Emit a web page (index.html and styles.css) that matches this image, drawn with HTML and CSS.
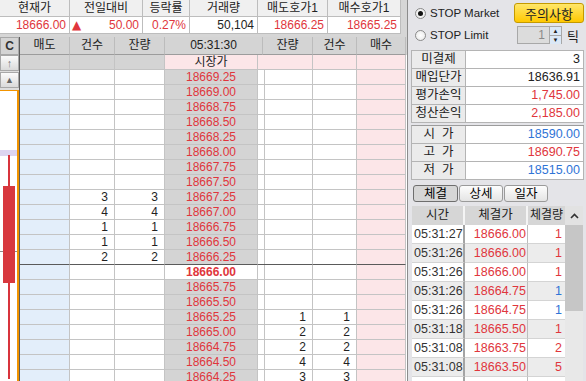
FILE: index.html
```html
<!DOCTYPE html>
<html lang="ko">
  <head>
    <meta charset="UTF-8" />
    <meta name="viewport" content="width=device-width, initial-scale=1.0" />
    <title>호가창</title>
    <link rel="stylesheet" href="styles.css">
  </head>
  <body>
    <div id="screen">
      <div class="left">
        <div class="quote">
          <div class="qh">현재가</div>
          <div class="qh">전일대비</div>
          <div class="qh">등락률</div>
          <div class="qh">거래량</div>
          <div class="qh">매도호가1</div>
          <div class="qh">매수호가1</div>
          <div class="qv up">18666.00</div>
          <div class="qv up diff"><span class="tri">▲</span><span>50.00</span></div>
          <div class="qv up">0.27%</div>
          <div class="qv">50,104</div>
          <div class="qv up">18666.25</div>
          <div class="qv up">18665.25</div>
        </div>
        <div class="book-wrap">
          <div class="side">
            <button class="tool tool-c">C</button>
            <button class="tool tool-up">↑</button>
            <button class="tool tool-tri">▲</button>
            <div class="chart">
              <div class="band"></div>
              <div class="tick"></div>
              <div class="wick"></div>
              <div class="candle"></div>
            </div>
          </div>
          <div class="book">
            <div class="book-head">
              <div>매도</div>
              <div>건수</div>
              <div>잔량</div>
              <div>05:31:30</div>
              <div>잔량</div>
              <div>건수</div>
              <div>매수</div>
            </div>
            <div class="book-row market">
              <div class="gray"></div><div class="gray"></div><div class="gray"></div>
              <div class="px">시장가</div>
              <div class="bar"></div><div></div><div></div><div class="bid"></div>
            </div>
            <div id="rows"></div>
          </div>
        </div>
      </div>

      <div class="right">
        <div class="opts">
          <label class="radio"><span class="dot on"></span>STOP Market</label>
          <button class="notice">주의사항</button>
          <label class="radio"><span class="dot"></span>STOP Limit</label>
          <div class="spin">
            <span class="spin-box">1</span>
            <span class="spin-btn"><i>▲</i><i>▼</i></span>
            <span class="unit">틱</span>
          </div>
        </div>
        <div class="info">
          <div class="lb">미결제</div><div class="vl">3</div>
          <div class="lb">매입단가</div><div class="vl">18636.91</div>
          <div class="lb">평가손익</div><div class="vl up">1,745.00</div>
          <div class="lb">청산손익</div><div class="vl up">2,185.00</div>
        </div>
        <div class="info info-price">
          <div class="lb">시&nbsp;&nbsp;가</div><div class="vl down">18590.00</div>
          <div class="lb">고&nbsp;&nbsp;가</div><div class="vl up">18690.75</div>
          <div class="lb">저&nbsp;&nbsp;가</div><div class="vl down">18515.00</div>
        </div>
        <div class="tabs">
          <button class="tab on">체결</button>
          <button class="tab">상세</button>
          <button class="tab">일자</button>
        </div>
        <div class="trades">
          <div class="tlist">
            <div class="trow thead"><div>시간</div><div>체결가</div><div>체결량</div></div>
            <div class="trow"><div>05:31:27</div><div>18666.00</div><div class="up">1</div></div>
            <div class="trow"><div>05:31:26</div><div>18666.00</div><div class="up">1</div></div>
            <div class="trow"><div>05:31:26</div><div>18666.00</div><div class="up">1</div></div>
            <div class="trow"><div>05:31:26</div><div>18664.75</div><div class="down">1</div></div>
            <div class="trow"><div>05:31:26</div><div>18664.75</div><div class="down">1</div></div>
            <div class="trow"><div>05:31:18</div><div>18665.50</div><div class="up">1</div></div>
            <div class="trow"><div>05:31:08</div><div>18663.75</div><div class="up">2</div></div>
            <div class="trow"><div>05:31:08</div><div>18663.50</div><div class="up">5</div></div>
            <div class="trow"><div>05:31:06</div><div>18663.75</div><div class="down">1</div></div>
          </div>
          <div class="scroll">
            <div class="sc-up">
              <svg width="9" height="6" viewBox="0 0 9 6"><polyline points="1,5 4.5,1.5 8,5" fill="none" stroke="#333" stroke-width="1.6" /></svg>
            </div>
            <div class="sc-thumb"></div>
          </div>
        </div>
      </div>
    </div>
    <script>
      // 호가 잔량
      const asks = { "18667.25": [3, 3], "18667.00": [4, 4], "18666.75": [1, 1], "18666.50": [1, 1], "18666.25": [2, 2] };
      const bids = { "18665.25": [1, 1], "18665.00": [2, 2], "18664.75": [2, 2], "18664.50": [4, 4], "18664.25": [3, 3] };
      const current = "18666.00";
      const box = document.querySelector("#rows");
      for (let p = 18669.25; p >= 18664.25; p -= 0.25) {
        const price = p.toFixed(2);
        const a = asks[price] || ["", ""];
        const b = bids[price] || ["", ""];
        const row = document.createElement("div");
        row.className = "book-row";
        if (price === current) row.classList.add("cur");
        if (price === "18666.25") row.classList.add("above");
        row.innerHTML = `<div class="ask"></div><div>${a[0]}</div><div>${a[1]}</div><div class="px">${price}</div><div class="bar"></div><div>${b[0]}</div><div>${b[1]}</div><div class="bid"></div>`;
        box.appendChild(row);
      }
    </script>
  </body>
</html>
```

FILE: styles.css
```css
* {
  padding: 0;
  margin: 0;
  box-sizing: border-box;
}
body {
  font-family: "Liberation Sans", "Noto Sans CJK KR", sans-serif;
  font-size: 12px;
  color: #222;
  background: #e4e4e8;
}
button {
  font-family: inherit;
}
#screen {
  display: flex;
  width: 586px;
  height: 381px;
  overflow: hidden;
}
.up {
  color: #e0363c;
}
.down {
  color: #2f74d6;
}

/* 상단 시세 */
.left {
  width: 407px;
  display: flex;
  flex-direction: column;
  background: #d6d6d6;
}
.quote {
  display: grid;
  grid-template-columns: 70px 73px 47px 68px 70px 73px;
  margin-bottom: 3px;
}
.quote div {
  height: 17px;
  line-height: 16px;
  border-right: 1px solid #bdbdbd;
  border-bottom: 1px solid #bdbdbd;
}
.qh {
  background: #f0f0f0;
  text-align: center;
}
.qv {
  background: #fff;
  text-align: right;
  padding-right: 3px;
}
.diff {
  display: flex;
  justify-content: space-between;
  padding-left: 2px;
}
.tri {
  font-size: 12px;
  font-family: "DejaVu Sans", sans-serif;
}

/* 호가 */
.book-wrap {
  flex: 1;
  display: flex;
  min-height: 0;
}
.side {
  width: 20px;
  display: flex;
  flex-direction: column;
  background: #dedede;
  border-right: 1px solid #5c5c5c;
}
.tool {
  border: 1px solid #a8a8a8;
  background: linear-gradient(#fbfbfb, #dadada);
  color: #777;
  font-size: 11px;
  line-height: 14px;
}
.tool-c {
  height: 18px;
  background: #d4d4d4;
  color: #333;
  font-weight: bold;
  font-size: 12px;
}
.tool-up {
  height: 16px;
}
.tool-tri {
  height: 16px;
  margin-top: 1px;
  font-size: 9px;
  color: #666;
}
.chart {
  flex: 1;
  margin-top: 2px;
  position: relative;
  background: #fff;
  border-top: 1px solid #f29400;
  border-right: 2px solid #f29400;
}
.band {
  position: absolute;
  left: 0;
  right: 0;
  top: 59px;
  height: 6px;
  background: #ddd5f0;
}
.tick {
  position: absolute;
  left: 0;
  right: 0;
  top: 160px;
  height: 1px;
  background: #8c8c8c;
}
.wick {
  position: absolute;
  left: 8px;
  width: 2px;
  top: 64px;
  bottom: 2px;
  background: #d8343c;
}
.candle {
  position: absolute;
  left: 3px;
  width: 12px;
  top: 95px;
  height: 97px;
  background: #d8383e;
}
.book {
  flex: 1;
  display: flex;
  flex-direction: column;
  overflow: hidden;
  background: #fff;
}
.book-head {
  display: grid;
  grid-template-columns: 50px 45px 50px 98px 50px 44px 49px;
  height: 18px;
  flex-shrink: 0;
  background: #d4d4d4;
}
.book-head div {
  text-align: center;
  line-height: 17px;
  border-right: 1px solid #bcbcbc;
  border-bottom: 1px solid #9c9c9c;
}
.book-row {
  display: grid;
  grid-template-columns: 50px 45px 50px 93px 5px 50px 44px 49px;
  height: 15px;
}
.book-row div {
  line-height: 14px;
  text-align: right;
  padding-right: 6px;
  border-right: 1px solid #c4c4c4;
  border-bottom: 1px solid #c4c4c4;
}
.book-row .ask {
  background: #e3eefa;
}
.book-row .bid {
  background: #fce6e8;
}
.book-row .px {
  background: #d4d4d4;
  color: #e0363c;
  text-align: center;
  padding: 0;
}
.market div {
  background: #fce6e8;
}
.market .gray {
  background: #d4d4d4;
}
.market .px {
  background: #fce6e8;
  color: #222;
}
.above div {
  border-bottom-color: #5a5a5a;
}
.cur .px {
  background: #fff;
  font-weight: bold;
}

/* 오른쪽 패널 */
.right {
  flex: 1;
  display: flex;
  flex-direction: column;
  border-left: 1px solid #8c8c8c;
  padding: 0 2px 0 3px;
}
.opts {
  display: grid;
  grid-template-columns: 1fr 70px;
  grid-template-rows: 22px 22px;
  align-items: center;
  height: 50px;
  padding-top: 2px;
}
.radio {
  display: flex;
  align-items: center;
  padding-left: 4px;
  font-size: 11.5px;
}
.dot {
  width: 11px;
  height: 11px;
  border-radius: 50%;
  border: 1px solid #8a8a8a;
  background: radial-gradient(#fff, #e6e6e6);
  margin-right: 4px;
  display: flex;
  align-items: center;
  justify-content: center;
}
.dot.on::after {
  content: "";
  width: 5px;
  height: 5px;
  border-radius: 50%;
  background: #111;
}
.notice {
  height: 20px;
  width: 70px;
  border: 1px solid #c49a00;
  border-radius: 3px;
  background: linear-gradient(#ffe76a, #ffc800);
  font-size: 13px;
  color: #222;
}
.spin {
  display: flex;
  align-items: center;
  padding-left: 3px;
  height: 18px;
}
.spin-box {
  width: 33px;
  height: 18px;
  background: #dcdcdc;
  border: 1px solid #a8a8a8;
  color: #8a8a8a;
  text-align: right;
  padding-right: 4px;
  line-height: 16px;
}
.spin-btn {
  width: 12px;
  height: 18px;
  display: flex;
  flex-direction: column;
  border: 1px solid #a8a8a8;
  border-left: 0;
}
.spin-btn i {
  flex: 1;
  font-style: normal;
  font-size: 6px;
  line-height: 8px;
  text-align: center;
  background: #dbe8f6;
  color: #222;
}
.spin-btn i + i {
  border-top: 1px solid #a8a8a8;
}
.unit {
  margin-left: 5px;
  font-size: 13px;
}
.info {
  display: grid;
  grid-template-columns: 54px 1fr;
  grid-auto-rows: 18px;
  border-top: 1px solid #b4b4b4;
  border-left: 1px solid #b4b4b4;
}
.info-price {
  margin-top: 2px;
  border-top: 1px solid #9c9c9c;
}
.info div {
  border-right: 1px solid #b4b4b4;
  border-bottom: 1px solid #b4b4b4;
  line-height: 17px;
}
.lb {
  background: #ebebeb;
  text-align: center;
  font-size: 12.5px;
}
.vl {
  background: #fff;
  text-align: right;
  padding-right: 3px;
  font-size: 12.5px;
}
.tabs {
  display: flex;
  gap: 1px;
  margin: 5px 0 0 2px;
}
.tab {
  width: 44px;
  height: 17px;
  border: 1px solid #9a9a9a;
  border-radius: 3px;
  background: linear-gradient(#fdfdfd, #e4e4e4);
  font-size: 12.5px;
  line-height: 14px;
}
.tab.on {
  width: 45px;
  background: #d6d6d6;
  border-color: #6e6e6e;
}
.trades {
  flex: 1;
  display: flex;
  margin: 4px 0 0 1px;
  min-height: 0;
}
.tlist {
  width: 153px;
  overflow: hidden;
}
.trow {
  display: grid;
  grid-template-columns: 53px 63px 37px;
  height: 19px;
  font-size: 12.5px;
}
.trow:nth-child(odd) {
  background: #ececec;
}
.trow:nth-child(even) {
  background: #fff;
}
.trow div {
  line-height: 18px;
  border-bottom: 1px solid #d4d4d4;
  white-space: nowrap;
  overflow: hidden;
}
.trow div:nth-child(1) {
  color: #333;
  padding-left: 2px;
  border-right: 2px solid #a4a4a4;
}
.trow div:nth-child(2) {
  color: #e0363c;
  text-align: right;
  padding-right: 1px;
  border-right: 1px solid #bdbdbd;
}
.trow div:nth-child(3) {
  text-align: right;
  padding-right: 3px;
}
.trow.thead {
  background: #d6d6d6;
}
.trow.thead div {
  color: #222;
  text-align: center;
  padding: 0;
  border-bottom: 0;
  border-right: 2px solid #f4f4f4;
}
.trow.thead div:nth-child(3) {
  border-right: 0;
  font-size: 12px;
}
.scroll {
  width: 18px;
  display: flex;
  flex-direction: column;
  background: #e8e8e8;
}
.sc-up {
  height: 19px;
  display: flex;
  align-items: center;
  justify-content: center;
  background: #e2e2e2;
}
.sc-thumb {
  height: 86px;
  background: #c6c6c6;
}
```
